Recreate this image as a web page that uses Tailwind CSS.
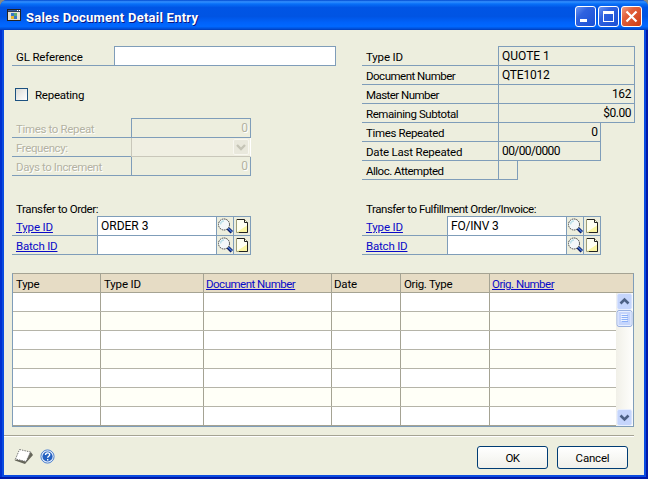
<!DOCTYPE html>
<html lang="en">
<head>
<meta charset="utf-8">
<title>Sales Document Detail Entry</title>
<script src="https://cdn.jsdelivr.net/npm/@tailwindcss/browser@4"></script>
</head>
<body class="w-[648px] h-[479px] overflow-hidden bg-[#8a8a80] font-[Roboto,'Liberation_Sans',sans-serif] text-[11.5px] leading-[18px] text-black">
<svg class="hidden">
  <symbol id="lens" viewBox="0 0 16 18">
    <path d="M10.500 11l4.300 4.300" stroke="#0b1d68" stroke-width="3.400"/>
    <path d="M10.700 10.900l4 3.800" stroke="#4a80e0" stroke-width="1.300"/>
    <circle cx="7" cy="7.500" r="5.500" fill="#f4f8fa" stroke="#444" stroke-width="1" stroke-dasharray="1.600 .7"/>
    <path d="M3.500 7.500a3.500 3.500 0 0 1 3.500-3.500" fill="none" stroke="#b9dfe8" stroke-width="1.400"/>
  </symbol>
  <symbol id="note" viewBox="0 0 16 18">
    <path d="M2.500 2.500h8l3 3v10h-11z" fill="#fffff2" stroke="#a0a078"/>
    <path d="M3 15h10V8.500z" fill="#fbf6a4"/>
    <path d="M3 2.500h7.500v3h3v10H5" fill="none" stroke="#222" stroke-width="1"/>
  </symbol>
</svg>
<div class="w-[648px] h-[479px] rounded-t-[7px] bg-[#0a4be0] flex flex-col overflow-hidden">
  <header class="h-[30px] shrink-0 flex items-center pl-[7px] pr-[6px] bg-[linear-gradient(180deg,#0048cf_0%,#3390ff_6%,#0870f8_13%,#0055e5_25%,#0054e3_55%,#0062fa_75%,#0068ff_88%,#0052dc_95%,#003cb9_100%)]">
    <svg class="w-[14px] h-[12px] mt-[-1px]" viewBox="0 0 14 12"><path d="M0 0h14v12H0z" fill="#222"/><path d="M1 3h12v8H1z" fill="#e4e0d2"/><path d="M1 1h12v1.500H1z" fill="#3a5a9c"/><path d="M10 1h1v1h-1zM12 1h1v1h-1z" fill="#fff"/><path d="M4 4h3v3H4z" fill="#3775c8"/><path d="M7 4h3v3H7z" fill="#5cab74"/><path d="M4 7h3v3H4z" fill="#e6b52c"/><path d="M7 7h3v3H7z" fill="#3775c8"/></svg>
    <h1 class="ml-[5px] mt-[5px] grow text-white font-bold text-[13px] leading-[18px] tracking-[0.24px] [text-shadow:1px_1px_0_#0a1883] whitespace-nowrap">Sales Document Detail Entry</h1>
    <div class="flex gap-[2px] mt-[3px]">
      <svg class="w-[21px] h-[21px]" viewBox="0 0 21 21"><defs><linearGradient id="bl" x1="0" y1="0" x2="1" y2="1"><stop offset="0" stop-color="#6f98f2"/><stop offset=".35" stop-color="#2f62e0"/><stop offset="1" stop-color="#1a4fd4"/></linearGradient></defs><rect x=".5" y=".5" width="20" height="20" rx="2.5" fill="url(#bl)" stroke="#fff"/><path d="M5 13h7v3H5z" fill="#fff"/></svg>
      <svg class="w-[21px] h-[21px]" viewBox="0 0 21 21"><rect x=".5" y=".5" width="20" height="20" rx="2.5" fill="url(#bl)" stroke="#fff"/><path d="M5 5h11v11H5zM6 8v7h9V8z" fill="#fff" fill-rule="evenodd"/></svg>
      <svg class="w-[21px] h-[21px]" viewBox="0 0 21 21"><defs><linearGradient id="rd" x1="0" y1="0" x2="1" y2="1"><stop offset="0" stop-color="#f0a088"/><stop offset=".35" stop-color="#e2603c"/><stop offset="1" stop-color="#cc3a12"/></linearGradient></defs><rect x=".5" y=".5" width="20" height="20" rx="2.5" fill="url(#rd)" stroke="#fff"/><path d="M5.500 5.500l10 10M15.500 5.500l-10 10" stroke="#fff" stroke-width="2.2"/></svg>
    </div>
  </header>

  <div class="h-[449px] px-[4px] pb-[4px] shadow-[inset_-2px_-2px_0_#0019a8,inset_2px_0_0_#0030d0]">
  <main class="h-[445px] bg-[#edeede] flex flex-col">
    <div class="flex pl-[8px] pt-[16px] h-[243px]">
      <section class="w-[350px]">
        <div class="flex w-[324px] h-[20px] border-b border-[#7f9db9]">
          <label class="w-[102px] pl-[4px] pt-[2px] tracking-[-0.15px]">GL Reference</label>
          <div class="grow bg-white border-t border-x border-[#7f9db9]"></div>
        </div>
        <div class="flex items-center h-[13px] mt-[22px] pl-[3px]">
          <span class="size-[13px] border border-[#1c5180] bg-linear-to-br from-[#dcdcd7] to-white"></span>
          <label class="ml-[7px] mt-[1px] tracking-[-0.25px]">Repeating</label>
        </div>
        <div class="mt-[17px] w-[239px] text-[#b3b2a2] [text-shadow:1px_1px_0_#fff]">
          <div class="flex h-[20px] border-b border-[#7f9db9]"><label class="w-[119px] pl-[4px] pt-[2px] whitespace-nowrap tracking-[-0.35px]">Times to Repeat</label><div class="grow border-t border-x border-[#7f9db9] text-right pr-[2px] text-[12px]">0</div></div>
          <div class="flex h-[19px] border-b border-[#7f9db9]"><label class="w-[119px] pl-[4px] pt-[1px] tracking-[-0.4px]">Frequency:</label><div class="grow h-[19px] border-b border-x border-[#c9c7ba] border-r-white flex justify-end p-px bg-[#f0efe2]"><svg class="w-[16px] h-[16px]" viewBox="0 0 16 16"><rect x=".5" y=".5" width="15" height="15" rx="1.500" fill="#e9e8dc" stroke="#f8f7f0"/><path d="M4 6l4 4 4-4" fill="none" stroke="#c5c4b6" stroke-width="2.400"/></svg></div></div>
          <div class="flex h-[19px] border-b border-[#7f9db9]"><label class="w-[119px] pl-[4px] pt-[1px] whitespace-nowrap tracking-[-0.4px]">Days to Increment</label><div class="grow border-x border-[#7f9db9] text-right pr-[2px] text-[12px]">0</div></div>
        </div>
        <div class="mt-[24px] h-[16px] pl-[4px] leading-[19px] tracking-[-0.4px]">Transfer to Order:</div>
        <div class="w-[239px]">
          <div class="flex h-[20px] border-b border-[#7f9db9]"><a class="w-[85px] pl-[4px] pt-[2px] underline text-[#0a0ac8] tracking-[-0.15px]">Type ID</a><div class="w-[120px] border-t border-x border-[#7f9db9] bg-white pl-[3px] text-[12px]">ORDER 3</div><svg class="w-[16px] h-[19px] border-t border-[#7f9db9]"><use href="#lens" width="16" height="18"/></svg><svg class="w-[18px] h-[19px] border-t border-x border-[#7f9db9]"><use href="#note" width="16" height="18"/></svg></div>
          <div class="flex h-[19px] border-b border-[#7f9db9]"><a class="w-[85px] pl-[4px] pt-[1px] underline text-[#0a0ac8] tracking-[-0.2px]">Batch ID</a><div class="w-[120px] border-x border-[#7f9db9] bg-white"></div><svg class="w-[16px] h-[18px]"><use href="#lens" width="16" height="18"/></svg><svg class="w-[18px] h-[18px] border-x border-[#7f9db9]"><use href="#note" width="16" height="18"/></svg></div>
        </div>
      </section>

      <section class="w-[273px]">
        <div class="flex h-[20px]"><label class="w-[136px] pl-[4px] pt-[2px] border-b border-[#7f9db9] tracking-[-0.15px]">Type ID</label><div class="w-[137px] border border-[#7f9db9] pl-[3px] text-[12px]">QUOTE 1</div></div>
        <div class="flex h-[19px]"><label class="w-[136px] pl-[4px] pt-[1px] border-b border-[#7f9db9] tracking-[-0.5px]">Document Number</label><div class="w-[137px] border-x border-b border-[#7f9db9] pl-[3px] text-[12px] tracking-[-0.2px]">QTE1012</div></div>
        <div class="flex h-[19px]"><label class="w-[136px] pl-[4px] pt-[1px] border-b border-[#7f9db9] tracking-[-0.55px]">Master Number</label><div class="w-[137px] border-x border-b border-[#7f9db9] text-right pr-[3px] text-[12px] tracking-[-0.4px]">162</div></div>
        <div class="flex h-[19px]"><label class="w-[136px] pl-[4px] pt-[1px] border-b border-[#7f9db9] tracking-[-0.42px]">Remaining Subtotal</label><div class="w-[137px] border-x border-b border-[#7f9db9] text-right pr-[3px] text-[12px] tracking-[-0.5px]">$0.00</div></div>
        <div class="flex h-[19px]"><label class="w-[136px] pl-[4px] pt-[1px] border-b border-[#7f9db9] tracking-[-0.35px]">Times Repeated</label><div class="w-[103px] border-x border-b border-[#7f9db9] text-right pr-[2px] text-[12px]">0</div></div>
        <div class="flex h-[19px]"><label class="w-[136px] pl-[4px] pt-[1px] border-b border-[#7f9db9] tracking-[-0.2px]">Date Last Repeated</label><div class="w-[103px] border-x border-b border-[#7f9db9] pl-[3px] text-[12px] tracking-[-0.6px]">00/00/0000</div></div>
        <div class="flex h-[19px]"><label class="w-[136px] pl-[4px] pt-[1px] border-b border-[#7f9db9] tracking-[-0.5px]">Alloc. Attempted</label><div class="w-[20px] border-x border-b border-[#7f9db9]"></div></div>
        <div class="mt-[20px] h-[16px] pl-[4px] leading-[19px] whitespace-nowrap tracking-[-0.46px]">Transfer to Fulfillment Order/Invoice:</div>
        <div class="w-[239px]">
          <div class="flex h-[20px] border-b border-[#7f9db9]"><a class="w-[85px] pl-[4px] pt-[2px] underline text-[#0a0ac8] tracking-[-0.15px]">Type ID</a><div class="w-[120px] border-t border-x border-[#7f9db9] bg-white pl-[3px] text-[12px] tracking-[-0.2px]">FO/INV 3</div><svg class="w-[16px] h-[19px] border-t border-[#7f9db9]"><use href="#lens" width="16" height="18"/></svg><svg class="w-[18px] h-[19px] border-t border-x border-[#7f9db9]"><use href="#note" width="16" height="18"/></svg></div>
          <div class="flex h-[19px] border-b border-[#7f9db9]"><a class="w-[85px] pl-[4px] pt-[1px] underline text-[#0a0ac8] tracking-[-0.2px]">Batch ID</a><div class="w-[120px] border-x border-[#7f9db9] bg-white"></div><svg class="w-[16px] h-[18px]"><use href="#lens" width="16" height="18"/></svg><svg class="w-[18px] h-[18px] border-x border-[#7f9db9]"><use href="#note" width="16" height="18"/></svg></div>
        </div>
      </section>
    </div>

    <section class="ml-[8px] w-[622px] h-[154px] border border-[#7f9db9] border-t-[#a5a393]">
      <div class="grid grid-cols-[88px_103px_128px_69px_89px_143px] h-[19px] bg-[#e6dcc5] border-b border-[#a5a393] leading-[20px] whitespace-nowrap">
        <div class="pl-[3px] border-r border-[#a5a393] tracking-[-0.3px]">Type</div>
        <div class="pl-[3px] border-r border-[#a5a393] tracking-[-0.15px]">Type ID</div>
        <div class="pl-[2px] border-r border-[#a5a393]"><a class="underline text-[#0a0ac8] tracking-[-0.5px]">Document Number</a></div>
        <div class="pl-[2px] border-r border-[#a5a393] tracking-[-0.2px]">Date</div>
        <div class="pl-[3px] border-r border-[#a5a393] tracking-[-0.3px]">Orig. Type</div>
        <div class="pl-[2px]"><a class="underline text-[#0a0ac8] tracking-[-0.5px]">Orig. Number</a></div>
      </div>
      <div class="flex h-[133px]">
        <div id="rows" class="w-[603px]"></div>
        <div class="w-[17px] h-[133px] bg-linear-to-r from-[#f1f0e8] to-[#fefefc] flex flex-col">
          <svg class="w-[17px] h-[17px]" viewBox="0 0 17 17"><rect x="1" y=".5" width="15" height="16" rx="2" fill="#c5d5fc" stroke="#e9effe"/><path d="M4.500 10.500l4-4 4 4" fill="none" stroke="#4d6185" stroke-width="2.600"/></svg>
          <svg class="w-[17px] h-[17px]" viewBox="0 0 17 17"><rect x="1" y=".5" width="15" height="16" rx="2" fill="#c5d5fc" stroke="#98b0e0"/><rect x="2" y="1.500" width="13" height="14" rx="1" fill="none" stroke="#e9effe"/><path d="M5 4.500h6M5 6.500h6M5 8.500h6M5 10.500h6" stroke="#eef4fe"/><path d="M6 5.500h6M6 7.500h6M6 9.500h6M6 11.500h6" stroke="#8cb0f8"/></svg>
          <svg class="w-[17px] h-[17px] mt-auto" viewBox="0 0 17 17"><rect x="1" y=".5" width="15" height="16" rx="2" fill="#c5d5fc" stroke="#e9effe"/><path d="M4.500 6.500l4 4 4-4" fill="none" stroke="#4d6185" stroke-width="2.600"/></svg>
        </div>
      </div>
    </section>

    <div class="mt-[8px] w-[630px] h-[2px] border-t border-[#a5a393] bg-white"></div>
    <footer class="flex items-start pt-[9px] pl-[10px]">
      <svg class="w-[20px] h-[18px] mt-[2px]" viewBox="0 0 20 18"><path d="M1 12.500l10 3.500 8-9-2.500-3.500-5 9-11-1z" fill="#66665a"/><path d="M5.500 1.500l11 2.500-4.500 9.500L1.500 11z" fill="#fff" stroke="#777" stroke-dasharray="1.500 1"/></svg>
      <svg class="w-[15px] h-[15px] ml-[6px] mt-[3px]" viewBox="0 0 15 15"><circle cx="7.500" cy="7.500" r="6.600" fill="#e6eefa" stroke="#4f82cf"/><circle cx="7.500" cy="7.500" r="5.100" fill="#2460c0"/><path d="M5.500 6c0-3 4.200-2.600 4.200-.3 0 1.500-2 1.500-2 3M7.700 10v1.500" fill="none" stroke="#fff" stroke-width="1.400"/></svg>
      <button class="ml-auto w-[71px] h-[23px] rounded-[3px] border border-[#003c74] bg-linear-to-b from-white to-[#f0f0ea] leading-[22px] tracking-[-0.5px]">OK</button>
      <button class="ml-[9px] mr-[16px] w-[71px] h-[23px] rounded-[3px] border border-[#003c74] bg-linear-to-b from-white to-[#f0f0ea] leading-[22px] tracking-[-0.2px]">Cancel</button>
    </footer>
  </main>
  </div>
</div>
<script>
  const row = `<div class="grid grid-cols-[88px_103px_128px_69px_89px_126px] h-[19px] border-b border-[#b5b4a8] last:border-[#a5a393] bg-white even:bg-[#fffff7]">${'<div class="border-r border-[#a5a393] last:border-r-0"></div>'.repeat(6)}</div>`;
  document.getElementById('rows').innerHTML = row.repeat(7);
</script>
</body>
</html>
